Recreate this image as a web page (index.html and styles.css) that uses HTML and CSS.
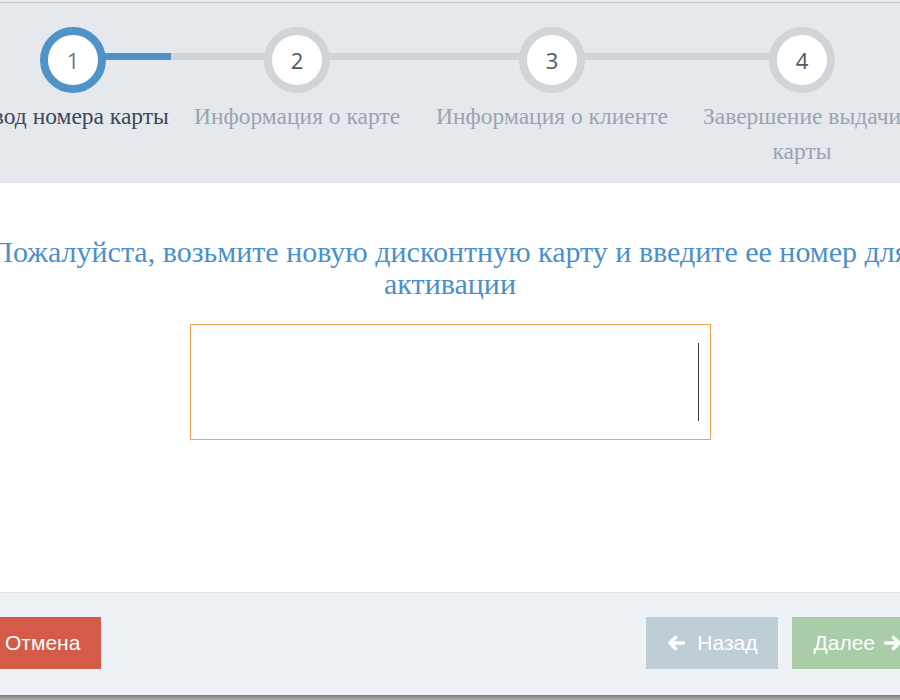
FILE: index.html
```html
<!DOCTYPE html>
<html lang="ru">
<head>
  <meta charset="UTF-8" />
  <meta name="viewport" content="width=device-width, initial-scale=1.0"/>
  <title>Активация дисконтной карты</title>
  <link rel="stylesheet" href="styles.css">
</head>
<body>

  <div class="top-strip"></div>

  <div class="modal">
    <div class="wizard-head">
      <div class="steps">
        <div class="track"><div class="track-done"></div></div>

        <div class="step step-1 active">
          <div class="circle">1</div>
          <div class="label">Ввод номера карты</div>
        </div>
        <div class="step step-2">
          <div class="circle">2</div>
          <div class="label">Информация о карте</div>
        </div>
        <div class="step step-3">
          <div class="circle">3</div>
          <div class="label">Информация о клиенте</div>
        </div>
        <div class="step step-4">
          <div class="circle">4</div>
          <div class="label">Завершение выдачи карты</div>
        </div>
      </div>
    </div>

    <div class="wizard-body">
      <h2 class="prompt">Пожалуйста, возьмите новую дисконтную карту и введите ее номер для активации</h2>
      <div class="card-input">
        <span class="caret"></span>
      </div>
    </div>

    <div class="wizard-foot">
      <button class="btn btn-cancel">Отмена</button>
      <div class="nav-btns">
        <button class="btn btn-back">
          <svg class="arrow" viewBox="0 0 18 16" width="19" height="16">
            <path d="M8 2.5 L2.5 8 L8 13.5 M2.5 8 H16" />
          </svg>
          Назад
        </button>
        <button class="btn btn-next">
          Далее
          <svg class="arrow" viewBox="0 0 18 16" width="19" height="16">
            <path d="M10 2.5 L15.5 8 L10 13.5 M15.5 8 H2" />
          </svg>
        </button>
      </div>
    </div>
  </div>

</body>
</html>
```

FILE: styles.css
```css
html, body {
  margin: 0;
  height: 100%;
}

body {
  background-color: #b3b3b3;
  overflow: hidden;
}

.top-strip {
  height: 2px;
  background-color: #f1f1f1;
}

.modal {
  width: 980px;
  margin-left: -40px;
  border-top: 1px solid #c6c6c6;
  box-shadow: 0 2px 4px rgba(0, 0, 0, 0.35);
}

/* steps */

.wizard-head {
  background-color: #e5e9ee;
  padding: 24px 0 14px;
}

.steps {
  position: relative;
  display: flex;
}

.track {
  position: absolute;
  top: 26px;
  left: 113px;
  width: 729px;
  height: 7px;
  background-color: #d1d4d9;
}

.track-done {
  width: 98px;
  height: 100%;
  background-color: #4f93c9;
}

.step {
  position: relative;
  display: flex;
  flex-direction: column;
  align-items: center;
}

.step-1 { width: 226px; }
.step-2 { width: 222px; }
.step-3 { width: 288px; }
.step-4 { width: 212px; }

.circle {
  box-sizing: border-box;
  width: 66px;
  height: 66px;
  border: 8px solid #d1d4d9;
  border-radius: 50%;
  background-color: #fff;
  display: flex;
  align-items: center;
  justify-content: center;
  font-family: "Open Sans", sans-serif;
  font-size: 22px;
  color: #4e5967;
}

.step.active .circle {
  border-color: #4f93c9;
  color: #6e7a87;
}

.label {
  margin-top: 6px;
  font-family: "Liberation Serif", serif;
  font-size: 23.5px;
  line-height: 35px;
  text-align: center;
  color: #9ba4ae;
}

.step.active .label {
  color: #3b4859;
}

/* body */

.wizard-body {
  background-color: #fff;
  padding: 53px 0 152px;
  display: flex;
  flex-direction: column;
  align-items: center;
}

.prompt {
  margin: 0 0 24px;
  width: 960px;
  font-family: "Liberation Serif", serif;
  font-weight: normal;
  font-size: 30px;
  line-height: 32px;
  text-align: center;
  color: #4b8fcb;
}

.card-input {
  box-sizing: border-box;
  width: 521px;
  height: 116px;
  border: 1px solid #f0a256;
  background-color: #fff;
  display: flex;
  justify-content: flex-end;
  align-items: center;
  padding-right: 11px;
}

.caret {
  width: 1px;
  height: 78px;
  background-color: #3c3c3c;
}

/* footer */

.wizard-foot {
  background-color: #eef1f6;
  border-top: 1px solid #e1e5ea;
  padding: 24px 17px 26px 24px;
  display: flex;
  justify-content: space-between;
}

.nav-btns {
  display: flex;
  gap: 14px;
}

.btn {
  height: 52px;
  padding: 0 21px;
  border: none;
  display: flex;
  align-items: center;
  gap: 11px;
  font-family: "Liberation Sans", Arial, sans-serif;
  font-size: 21px;
  color: #fff;
  cursor: pointer;
}

.btn-cancel {
  background-color: #d45b48;
}

.btn-back {
  background-color: #bfcdd7;
}

.btn-next {
  background-color: #a9cda9;
  gap: 8px;
}

.arrow path {
  fill: none;
  stroke: #fff;
  stroke-width: 3.6;
  stroke-linecap: round;
  stroke-linejoin: round;
}
```
